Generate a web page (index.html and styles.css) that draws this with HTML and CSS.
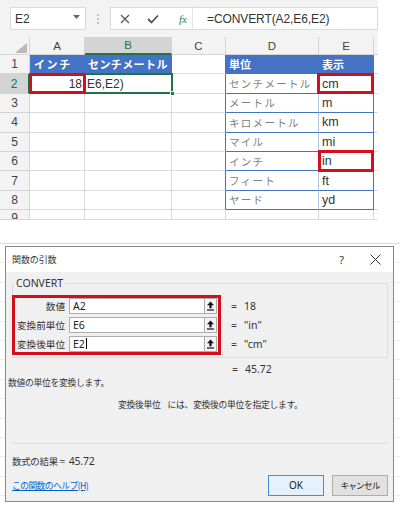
FILE: index.html
```html
<!DOCTYPE html>
<html lang="ja">
<head>
<meta charset="utf-8">
<link rel="stylesheet" href="styles.css">
</head>
<body>
<div class="page">
  <div class="fbar">
    <div class="namebox"><span>E2</span><svg class="caret" width="7" height="4" viewBox="0 0 7 4"><path d="M0 0H7L3.5 4Z" fill="#666"/></svg></div>
    <div class="dots"><i></i><i></i><i></i></div>
    <div class="fxicons">
      <svg width="10" height="10" viewBox="0 0 10 10"><path d="M1 1L9 9M9 1L1 9" stroke="#555" stroke-width="1.2"/></svg>
      <svg width="12" height="10" viewBox="0 0 12 10"><path d="M1 5L4.5 8.5L11 1.5" stroke="#555" stroke-width="1.8" fill="none"/></svg>
      <span class="fx">fx</span>
    </div>
    <div class="formula">=CONVERT(A2,E6,E2)</div>
  </div>

  <div class="sheet">
    <div class="c hd corner"><svg width="12" height="10" viewBox="0 0 12 10"><path d="M12 0V10H0Z" fill="#b9b9b9"/></svg></div>
    <div class="c hd">A</div>
    <div class="c hd sel">B</div>
    <div class="c hd">C</div>
    <div class="c hd">D</div>
    <div class="c hd">E</div>
    <div class="c hd"></div>

    <div class="c rh">1</div>
    <div class="c blue b1">インチ</div>
    <div class="c blue b2">センチメートル</div>
    <div class="c tl"></div>
    <div class="c blue">単位</div>
    <div class="c blue er">表示</div>
    <div class="c"></div>

    <div class="c rh rsel">2</div>
    <div class="c num">18</div>
    <div class="c edit">E6,E2)</div>
    <div class="c tl"></div>
    <div class="c unit">センチメートル</div>
    <div class="c sym er">cm</div>
    <div class="c"></div>

    <div class="c rh">3</div><div class="c"></div><div class="c"></div><div class="c tl"></div>
    <div class="c unit">メートル</div><div class="c sym er">m</div><div class="c"></div>

    <div class="c rh">4</div><div class="c"></div><div class="c"></div><div class="c tl"></div>
    <div class="c unit">キロメートル</div><div class="c sym er">km</div><div class="c"></div>

    <div class="c rh">5</div><div class="c"></div><div class="c"></div><div class="c tl"></div>
    <div class="c unit">マイル</div><div class="c sym er">mi</div><div class="c"></div>

    <div class="c rh">6</div><div class="c"></div><div class="c"></div><div class="c tl"></div>
    <div class="c unit">インチ</div><div class="c sym er">in</div><div class="c"></div>

    <div class="c rh">7</div><div class="c"></div><div class="c"></div><div class="c tl"></div>
    <div class="c unit">フィート</div><div class="c sym er">ft</div><div class="c"></div>

    <div class="c rh">8</div><div class="c"></div><div class="c"></div><div class="c tl"></div>
    <div class="c unit">ヤード</div><div class="c sym er">yd</div><div class="c"></div>

    <div class="c rh last">9</div><div class="c"></div><div class="c"></div><div class="c"></div>
    <div class="c"></div><div class="c"></div><div class="c"></div>

    <div class="selbox"><i class="handle"></i></div>
    <div class="red r-a2"></div>
    <div class="red r-e2"><i class="ants"></i></div>
    <div class="red r-e6"></div>
  </div>

  <div class="backdrop">
    <div class="dialog">
      <div class="titlebar">
        <span class="title">関数の引数</span>
        <span class="q">?</span>
        <svg class="close" width="11" height="11" viewBox="0 0 11 11"><path d="M0.5 0.5L10.5 10.5M10.5 0.5L0.5 10.5" stroke="#333" stroke-width="1"/></svg>
      </div>
      <div class="dbody">
        <div class="group">
          <span class="legend">CONVERT</span>
          <div class="grow">
            <div class="redbox">
              <div class="arg"><span class="lbl">数値</span><span class="inp">A2</span><span class="btn"><svg width="9" height="10" viewBox="0 0 9 10"><path d="M4.5 0.5L1 4.2H3.4V7.2H5.6V4.2H8Z" fill="#111"/><rect x="1" y="8.4" width="7" height="1.2" fill="#111"/></svg></span></div>
              <div class="arg"><span class="lbl">変換前単位</span><span class="inp">E6</span><span class="btn"><svg width="9" height="10" viewBox="0 0 9 10"><path d="M4.5 0.5L1 4.2H3.4V7.2H5.6V4.2H8Z" fill="#111"/><rect x="1" y="8.4" width="7" height="1.2" fill="#111"/></svg></span></div>
              <div class="arg"><span class="lbl">変換後単位</span><span class="inp">E2<i class="cursor"></i></span><span class="btn"><svg width="9" height="10" viewBox="0 0 9 10"><path d="M4.5 0.5L1 4.2H3.4V7.2H5.6V4.2H8Z" fill="#111"/><rect x="1" y="8.4" width="7" height="1.2" fill="#111"/></svg></span></div>
            </div>
            <div class="vals">
              <div class="val"><span class="eq">=</span>18</div>
              <div class="val"><span class="eq">=</span>"in"</div>
              <div class="val"><span class="eq">=</span>"cm"</div>
            </div>
          </div>
        </div>
        <div class="val total"><span class="eq">=</span>45.72</div>
        <div class="desc1">数値の単位を変換します。</div>
        <div class="desc2"><span class="argname">変換後単位</span>には、変換後の単位を指定します。</div>
        <div class="divider"></div>
        <div class="result">数式の結果 = <span class="rv">45.72</span></div>
        <div class="footer">
          <span class="help">この関数のヘルプ(H)</span>
          <span class="spacer"></span>
          <span class="pbtn ok">OK</span>
          <span class="pbtn cancel">キャンセル</span>
        </div>
      </div>
    </div>
  </div>
</div>
</body>
</html>
```

FILE: styles.css
```css
* { box-sizing: border-box; }
html, body { margin: 0; padding: 0; background: #fff; }
.page {
  width: 400px;
  height: 507px;
  overflow: hidden;
  font-family: "Noto Sans", "Noto Sans CJK JP", sans-serif;
  color: #333;
}

/* formula bar */
.fbar {
  height: 37px;
  background: #f3f3f3;
  display: flex;
  align-items: flex-start;
  padding: 7px 0 0 10px;
  width: 378px;
}
.namebox {
  width: 76px;
  height: 23px;
  background: #fff;
  border: 1px solid #dadada;
  display: flex;
  align-items: center;
  justify-content: space-between;
  padding: 0 5px 0 4px;
  font: 12px "Liberation Sans", sans-serif;
  color: #333;
}
.caret { margin-top: -3px; }
.dots {
  width: 24px;
  height: 23px;
  display: flex;
  flex-direction: column;
  align-items: center;
  justify-content: center;
  gap: 2px;
}
.dots i { width: 2px; height: 2px; background: #c2c2c2; display: block; }
.fxicons {
  width: 83px;
  height: 23px;
  background: #fff;
  border: 1px solid #dadada;
  border-right: 1px solid #e4e4e4;
  display: flex;
  align-items: center;
  padding-left: 9px;
  gap: 17px;
}
.fx {
  font: italic 11px "Liberation Serif", serif;
  color: #2f7d4a;
  margin-left: 3px;
}
.formula {
  flex: 1;
  height: 23px;
  background: #fff;
  border: 1px solid #dadada;
  border-left: none;
  display: flex;
  align-items: center;
  padding-left: 14px;
  font: 12px "Liberation Sans", sans-serif;
  letter-spacing: -0.1px;
  color: #333;
}

/* sheet */
.sheet {
  position: relative;
  width: 378px;
  display: grid;
  grid-template-columns: 30px 55px 87px 54px 93px 55px 4px;
  grid-template-rows: 18px repeat(8, 19.4px) 9.8px;
  overflow: hidden;
}
.c {
  border-right: 1px solid #dadada;
  border-bottom: 1px solid #dadada;
  display: flex;
  align-items: center;
  padding: 0 3px;
  overflow: hidden;
  white-space: nowrap;
  font: 12px "Liberation Sans", "Noto Sans CJK JP", sans-serif;
  color: #333;
}
.hd {
  background: #f3f3f3;
  justify-content: center;
  color: #444;
  border-color: #d4d4d4;
  font-size: 11.5px;
}
.hd.corner { justify-content: flex-end; align-items: flex-end; padding: 0 2px 1px 0; }
.hd.sel {
  background: #d4d4d4;
  color: #217346;
  border-bottom: 2px solid #217346;
}
.rh {
  background: #f3f3f3;
  justify-content: center;
  color: #444;
  border-color: #d4d4d4;
  font-size: 12px;
  padding: 0;
}
.rh.rsel { background: #d4d4d4; color: #217346; border-right: 2px solid #217346; }
.rh.last { align-items: flex-start; padding-top: 1px; }
.blue {
  background: #4472c4;
  color: #fff;
  font: bold 11px "Noto Sans CJK JP", sans-serif;
  border-bottom-color: #4472c4;
  border-right-color: #4472c4;
}
.b1 { letter-spacing: 1.6px; padding-left: 4px; }
.b2 { letter-spacing: 0.4px; padding-left: 3px; }
.tl { border-right-color: #4472c4; }
.er { border-right-color: #4472c4; }
.unit {
  font: 10.5px "Noto Sans CJK JP", sans-serif;
  letter-spacing: 1.3px;
  color: #808080;
  border-bottom-color: #4472c4;
  border-right-color: #b4c6e7;
}
.sym { border-bottom-color: #4472c4; font-size: 12.5px; color: #333; }
.num { justify-content: flex-end; padding-right: 2px; }
.edit { padding-left: 2px; }

.selbox {
  position: absolute;
  left: 84px;
  top: 36px;
  width: 89px;
  height: 21px;
  border: 2px solid #217346;
}
.handle {
  position: absolute;
  right: -4px;
  bottom: -4px;
  width: 5px;
  height: 5px;
  background: #217346;
  border: 1px solid #fff;
}
.red { position: absolute; border: 3px solid #d20f1b; }
.r-a2 { left: 29px; top: 36px; width: 57px; height: 21px; }
.r-e2 { left: 317px; top: 36px; width: 57px; height: 21px; }
.r-e6 { left: 318px; top: 113px; width: 56px; height: 22px; }
.ants {
  position: absolute;
  left: 0; right: 0; top: 0; bottom: 0;
  border-bottom: 1px dashed #fff;
  border-right: 1px dashed #fff;
}

/* backdrop + dialog */
.backdrop {
  margin-top: 23px;
  height: 264px;
  border-top: 1px solid #dcdcdc;
  padding: 2px 6px 5px 5px;
  background:
    repeating-linear-gradient(to bottom, transparent 0 18.4px, #ececec 18.4px 19.4px);
}
.dialog {
  width: 389px;
  height: 256px;
  border: 1px solid #8a8a8a;
  background: #f0f0f0;
  display: flex;
  flex-direction: column;
}
.titlebar {
  height: 25px;
  background: #fff;
  display: flex;
  align-items: center;
  padding-left: 6px;
}
.title { font: 9px "Noto Sans CJK JP", sans-serif; color: #333; letter-spacing: -0.1px; }
.q { margin-left: auto; font: 11px "Noto Sans", sans-serif; color: #333; margin-right: 26px; }
.close { margin-right: 12px; }
.dbody { flex: 1; display: flex; flex-direction: column; }

.group {
  position: relative;
  margin: 11px 5px 0 6px;
  height: 75px;
  border: 1px solid #dcdcdc;
  padding-top: 11px;
}
.legend {
  position: absolute;
  left: 1px;
  top: -8px;
  padding: 0 2px;
  background: #f0f0f0;
  font: 10.5px "Noto Sans", sans-serif;
  color: #333;
}
.grow { display: flex; align-items: flex-start; }
.redbox {
  width: 209px;
  height: 60px;
  margin-left: -1px;
  border: 3px solid #d20f1b;
  display: flex;
  flex-direction: column;
  gap: 3px;
}
.arg { display: flex; height: 16px; align-items: stretch; }
.lbl {
  width: 54px;
  text-align: right;
  padding-right: 4px;
  font: 9.6px/16px "Noto Sans CJK JP", sans-serif;
  color: #333;
}
.inp {
  width: 135px;
  background: #fff;
  border: 1px solid #adadad;
  border-right: none;
  font: 10.5px/14px "Noto Sans", sans-serif;
  padding-left: 3px;
  color: #222;
  display: flex;
  align-items: center;
}
.cursor { display: block; width: 1px; height: 11px; background: #000; margin-left: 1px; }
.btn {
  width: 13px;
  background: #f4f4f4;
  border: 1px solid #adadad;
  display: flex;
  align-items: center;
  justify-content: center;
}
.vals { margin-left: 10px; padding-top: 3px; display: flex; flex-direction: column; gap: 3px; }
.val { height: 16px; font: 10.5px/16px "Noto Sans", sans-serif; color: #333; }
.eq { display: inline-block; width: 13px; }
.total { margin: 5px 0 0 226px; height: 13px; line-height: 13px; }
.desc1 { margin: 0 0 0 2px; font: 8.8px/13px "Noto Sans CJK JP", sans-serif; letter-spacing: -0.3px; height: 13px; }
.desc2 { margin: 9px 0 0 112px; font: 8.8px/13px "Noto Sans CJK JP", sans-serif; letter-spacing: -0.3px; height: 13px; }
.argname { margin-right: 7px; }
.divider { margin: 32px 5px 0 6px; height: 1px; background: #dcdcdc; }
.result { margin: 11px 0 0 6px; font: 9.4px/13px "Noto Sans CJK JP", sans-serif; letter-spacing: -0.2px; height: 13px; }
.rv { font-family: "Noto Sans", sans-serif; font-size: 10.5px; margin-left: 2px; }
.footer { display: flex; align-items: center; margin: 7px 5px 0 6px; height: 21px; }
.help {
  font: 8.8px "Noto Sans CJK JP", sans-serif;
  letter-spacing: -0.6px;
  color: #0066cc;
  text-decoration: underline;
}
.spacer { flex: 1; }
.pbtn {
  width: 56px;
  height: 21px;
  display: flex;
  align-items: center;
  justify-content: center;
  font: 10px "Noto Sans", "Noto Sans CJK JP", sans-serif;
  color: #222;
}
.ok { background: #e5f1fb; border: 1px solid #3c8fd6; margin-right: 8px; }
.cancel { background: #e1e1e1; border: 1px solid #adadad; font-family: "Noto Sans CJK JP", sans-serif; font-size: 8.6px; letter-spacing: -0.8px; }
```
